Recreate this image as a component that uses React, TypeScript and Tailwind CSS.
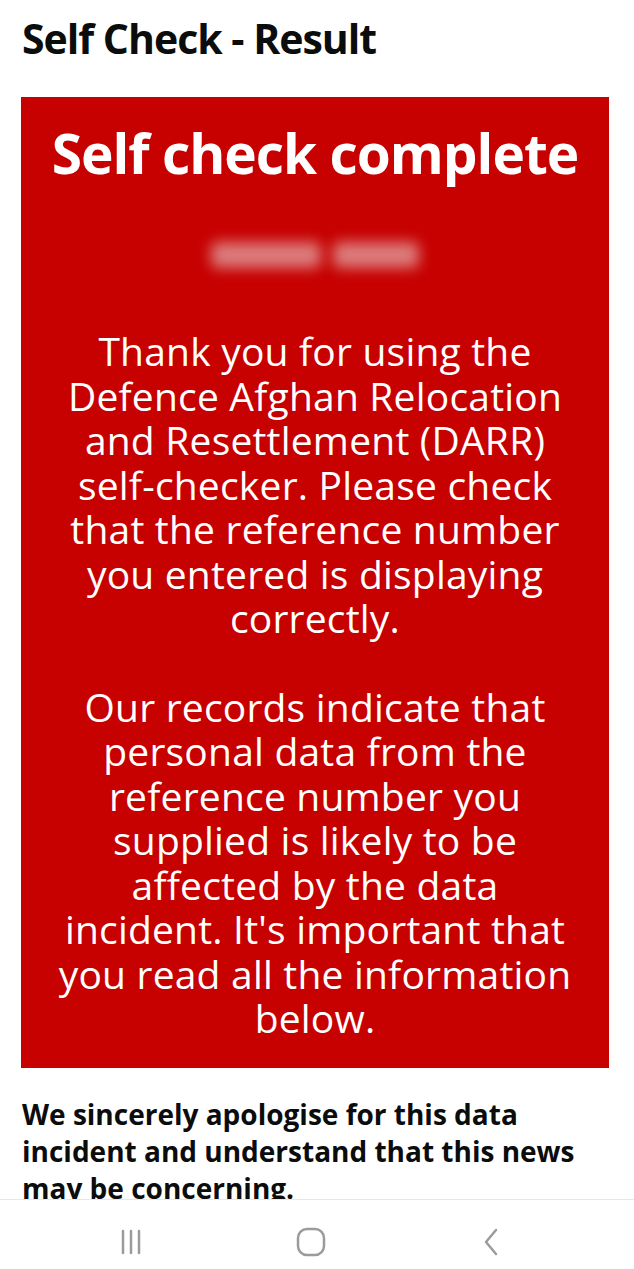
import React from 'react';

const FONT = { fontFamily: '"Open Sans", "Noto Sans", Arial, sans-serif' };

function NavBar() {
  return (
    <div className="h-[70px] shrink-0 border-t border-gray-200 bg-white flex items-center pl-[41px] pt-[14px] text-[#9b9b9b]">
      {/* recent apps */}
      <div className="w-[180px] flex justify-center">
        <svg width="26" height="26" viewBox="0 0 26 26">
          <path d="M5 2v22M13 2v22M21 2v22" stroke="currentColor" strokeWidth="2.5" strokeLinecap="round" />
        </svg>
      </div>
      {/* home */}
      <div className="w-[180px] flex justify-center">
        <svg width="30" height="30" viewBox="0 0 30 30">
          <rect x="2" y="2" width="26" height="26" rx="9" fill="none" stroke="currentColor" strokeWidth="2.5" />
        </svg>
      </div>
      {/* back */}
      <div className="w-[180px] flex justify-center">
        <svg width="18" height="28" viewBox="0 0 18 28">
          <path d="M14 2 L4 14 L14 26" fill="none" stroke="currentColor" strokeWidth="2.5" strokeLinecap="round" strokeLinejoin="round" />
        </svg>
      </div>
    </div>
  );
}

export default function App() {
  return (
    <div className="h-[1269px] w-[634px] flex flex-col bg-white overflow-hidden" style={FONT}>
      <div className="flex-1 overflow-hidden">
        {/* Header */}
        <h1 className="pl-[22px] pt-[14px] text-[41px] leading-[48px] font-bold tracking-[-1px] text-[#0b0c0c] whitespace-nowrap">
          Self Check - Result
        </h1>

        {/* Result panel */}
        <div className="ml-[21px] w-[588px] mt-[35px] h-[971px] bg-[#c70000] text-white text-center pt-[24px]">
          <h2 className="text-[55px] leading-[64px] font-bold tracking-[-1px] whitespace-nowrap">Self check complete</h2>

          {/* reference number, blurred out */}
          <div className="mt-[57px] flex justify-center gap-[12px]">
            <div className="w-[110px] h-[26px] rounded-md bg-[#dc7c7c] blur-[7px]" />
            <div className="w-[86px] h-[26px] rounded-md bg-[#dc7c7c] blur-[7px]" />
          </div>

          <p className="mt-[61px] text-[39px] leading-[44.5px] tracking-[0.2px] whitespace-nowrap">
            Thank you for using the<br />
            Defence Afghan Relocation<br />
            and Resettlement (DARR)<br />
            self-checker. Please check<br />
            that the reference number<br />
            you entered is displaying<br />
            correctly.
          </p>

          <p className="mt-[44px] text-[39px] leading-[44.5px] tracking-[0.2px] whitespace-nowrap">
            Our records indicate that<br />
            personal data from the<br />
            reference number you<br />
            supplied is likely to be<br />
            affected by the data<br />
            incident. It's important that<br />
            you read all the information<br />
            below.
          </p>
        </div>

        <p className="px-[22px] mt-[28px] text-[28px] leading-[37px] font-bold text-[#0b0c0c] whitespace-nowrap">
          We sincerely apologise for this data<br />
          incident and understand that this news<br />
          may be concerning.
        </p>
      </div>
      <NavBar />
    </div>
  );
}
